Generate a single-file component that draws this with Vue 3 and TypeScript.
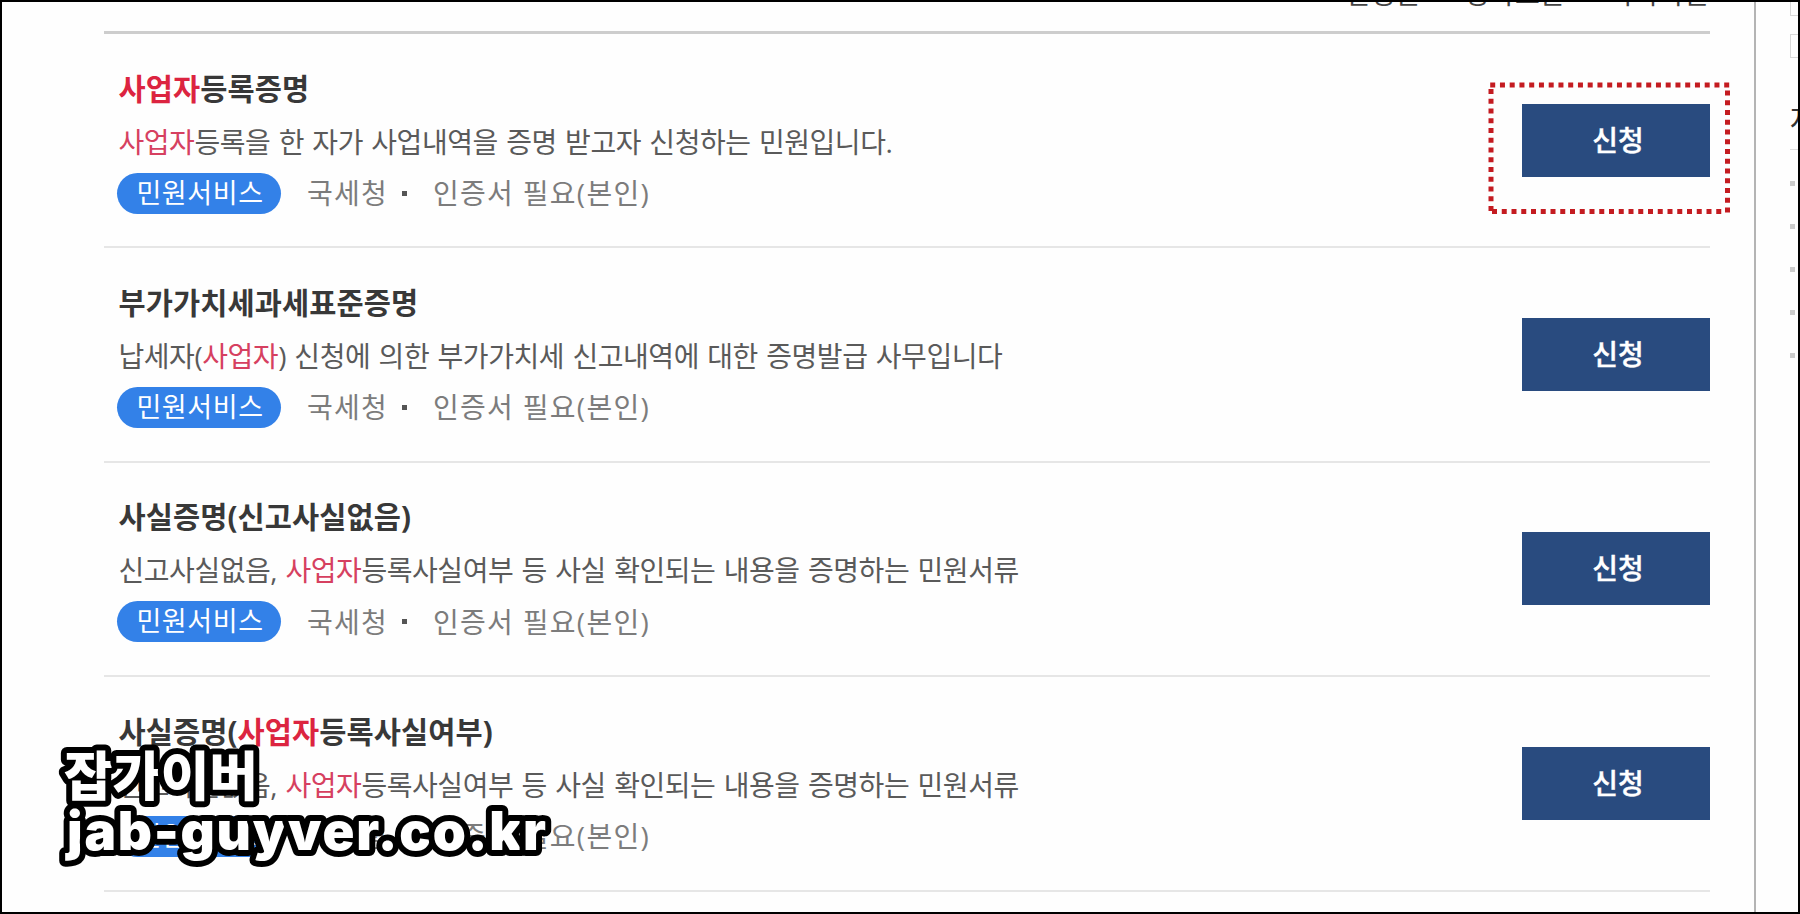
<script setup lang="ts">
interface Part { text: string; hit?: boolean }
interface Service { title: Part[]; desc: Part[]; marked?: boolean }

const hit: Part = { text: '사업자', hit: true }
const services: Service[] = [
  { title: [hit, { text: '등록증명' }], desc: [hit, { text: '등록을 한 자가 사업내역을 증명 받고자 신청하는 민원입니다.' }], marked: true },
  { title: [{ text: '부가가치세과세표준증명' }], desc: [{ text: '납세자(' }, hit, { text: ') 신청에 의한 부가가치세 신고내역에 대한 증명발급 사무입니다' }] },
  { title: [{ text: '사실증명(신고사실없음)' }], desc: [{ text: '신고사실없음, ' }, hit, { text: '등록사실여부 등 사실 확인되는 내용을 증명하는 민원서류' }] },
  { title: [{ text: '사실증명(' }, hit, { text: '등록사실여부)' }], desc: [{ text: '신고사실없음, ' }, hit, { text: '등록사실여부 등 사실 확인되는 내용을 증명하는 민원서류' }] },
]
const sorts = ['신청순', '정확도순', '가나다순']
</script>

<template>
  <div class="page">
    <main class="results">
      <div class="sorts"><span v-for="s in sorts" :key="s">{{ s }}</span></div>
      <ul class="list">
        <li v-for="(s, i) in services" :key="i" class="item">
          <div class="info">
            <h3 class="title"><span v-for="(p, k) in s.title" :key="k" :class="{ hit: p.hit }">{{ p.text }}</span></h3>
            <p class="desc"><span v-for="(p, k) in s.desc" :key="k" :class="{ hit: p.hit }">{{ p.text }}</span></p>
            <div class="meta">
              <span class="pill">민원서비스</span><span class="agency">국세청</span><i class="dot"></i><span class="cert">인증서 필요(본인)</span>
            </div>
          </div>
          <div class="action">
            <button class="apply" type="button">신청</button>
            <svg v-if="s.marked" class="marker" width="242" height="132" viewBox="0 0 242 132">
              <path d="M2.2 3H242M239.5 8.5V132M4 129.5H237M3 7V132" />
            </svg>
          </div>
        </li>
      </ul>
    </main>
    <aside class="side">
      <div class="field first"></div>
      <div class="field"></div>
      <div class="side-title">자주</div>
      <ul class="side-list"><li v-for="n in 5" :key="n"></li></ul>
    </aside>
    <svg class="watermark" width="520" height="140" viewBox="0 0 520 140">
      <text class="wm-ko" x="14" y="63.5" textLength="194">잡가이버</text>
      <text class="wm-url" x="17" y="118" textLength="479">jab-guyver.co.kr</text>
    </svg>
  </div>
</template>

<style>
body { margin: 0; background: #fff; }
</style>

<style scoped>
.page {
  position: relative;
  box-sizing: border-box;
  display: flex;
  width: 1800px;
  height: 914px;
  border: 2px solid #000;
  background: #fefefe;
  overflow: hidden;
  font-family: "Open Sans", "Noto Sans CJK KR", sans-serif;
}
.results { box-sizing: border-box; flex: none; width: 1754px; padding: 0 44px 0 102px; border-right: 2px solid #b4b4b4; }
.sorts {
  display: flex;
  justify-content: flex-end;
  align-items: flex-end;
  gap: 43px;
  height: 29px;
  border-bottom: 3px solid #cdcdcd;
  color: #444;
  font-size: 27px;
  line-height: 40px;
  letter-spacing: 0.5px;
}
.sorts span { margin-bottom: 17px; }
.list { margin: 0; padding: 0; list-style: none; }
.item {
  box-sizing: border-box;
  display: flex;
  justify-content: space-between;
  height: 214.4px;
  border-bottom: 2px solid #e6e6e6;
}
.info { padding: 33.6px 0 0 14.5px; white-space: nowrap; }
.title { margin: 0; height: 44px; color: #383838; font-size: 29.5px; font-weight: 700; line-height: 42px; letter-spacing: 0.1px; }
.title .hit { color: #dc2440; }
.desc { margin: 0; height: 61px; color: #5a5a5a; font-size: 28px; line-height: 60px; letter-spacing: -0.45px; word-spacing: 1.5px; }
.desc .hit { color: #d64060; }
.meta { display: flex; align-items: center; height: 41px; margin-left: -1.5px; color: #7c7c7c; font-size: 28px; line-height: 42px; letter-spacing: 1.3px; }
.pill { box-sizing: border-box; width: 164px; height: 41px; padding-left: 2px; border-radius: 21px; background: #3381e8; color: #fff; font-size: 27px; line-height: 39px; letter-spacing: 0.6px; text-align: center; }
.agency { width: 95px; margin-left: 26px; }
.dot { width: 5px; height: 5px; background: #555; }
.cert { margin-left: 26px; }
.action { position: relative; padding-top: 69.6px; }
.apply { display: block; width: 188px; height: 73px; padding: 0 0 3px 4px; border: 0; background: #294b7f; color: #fff; font: 500 28px/40px "Noto Sans CJK KR", sans-serif; -webkit-text-stroke: 0.4px #fff; }
.marker { position: absolute; left: -34px; top: 48px; }
.marker path { fill: none; stroke: #c41b20; stroke-width: 5; stroke-dasharray: 5 4.75; }
.side { box-sizing: border-box; width: 42px; padding-left: 34px; overflow: hidden; }
.field { box-sizing: border-box; width: 80px; height: 24px; border: 1px solid #d8d8d8; }
.field.first { height: 14px; margin-bottom: 18px; border-top: 0; }
.side-title { height: 91px; border-bottom: 1px solid #ddd; color: #333; font-size: 28px; line-height: 122px; white-space: nowrap; }
.side-list { display: grid; gap: 38px; margin: 0; padding: 31px 0 0; list-style: none; }
.side-list li { width: 5px; height: 5px; background: #ccc; }
.watermark { position: absolute; left: 48px; top: 730px; }
.watermark text { fill: #fff; stroke: #000; stroke-width: 12px; stroke-linejoin: round; paint-order: stroke fill; font-weight: 900; }
.wm-ko { font-family: "Noto Sans CJK KR", sans-serif; font-size: 53px; }
.wm-url { font-family: Inter, sans-serif; font-size: 53px; }
</style>
